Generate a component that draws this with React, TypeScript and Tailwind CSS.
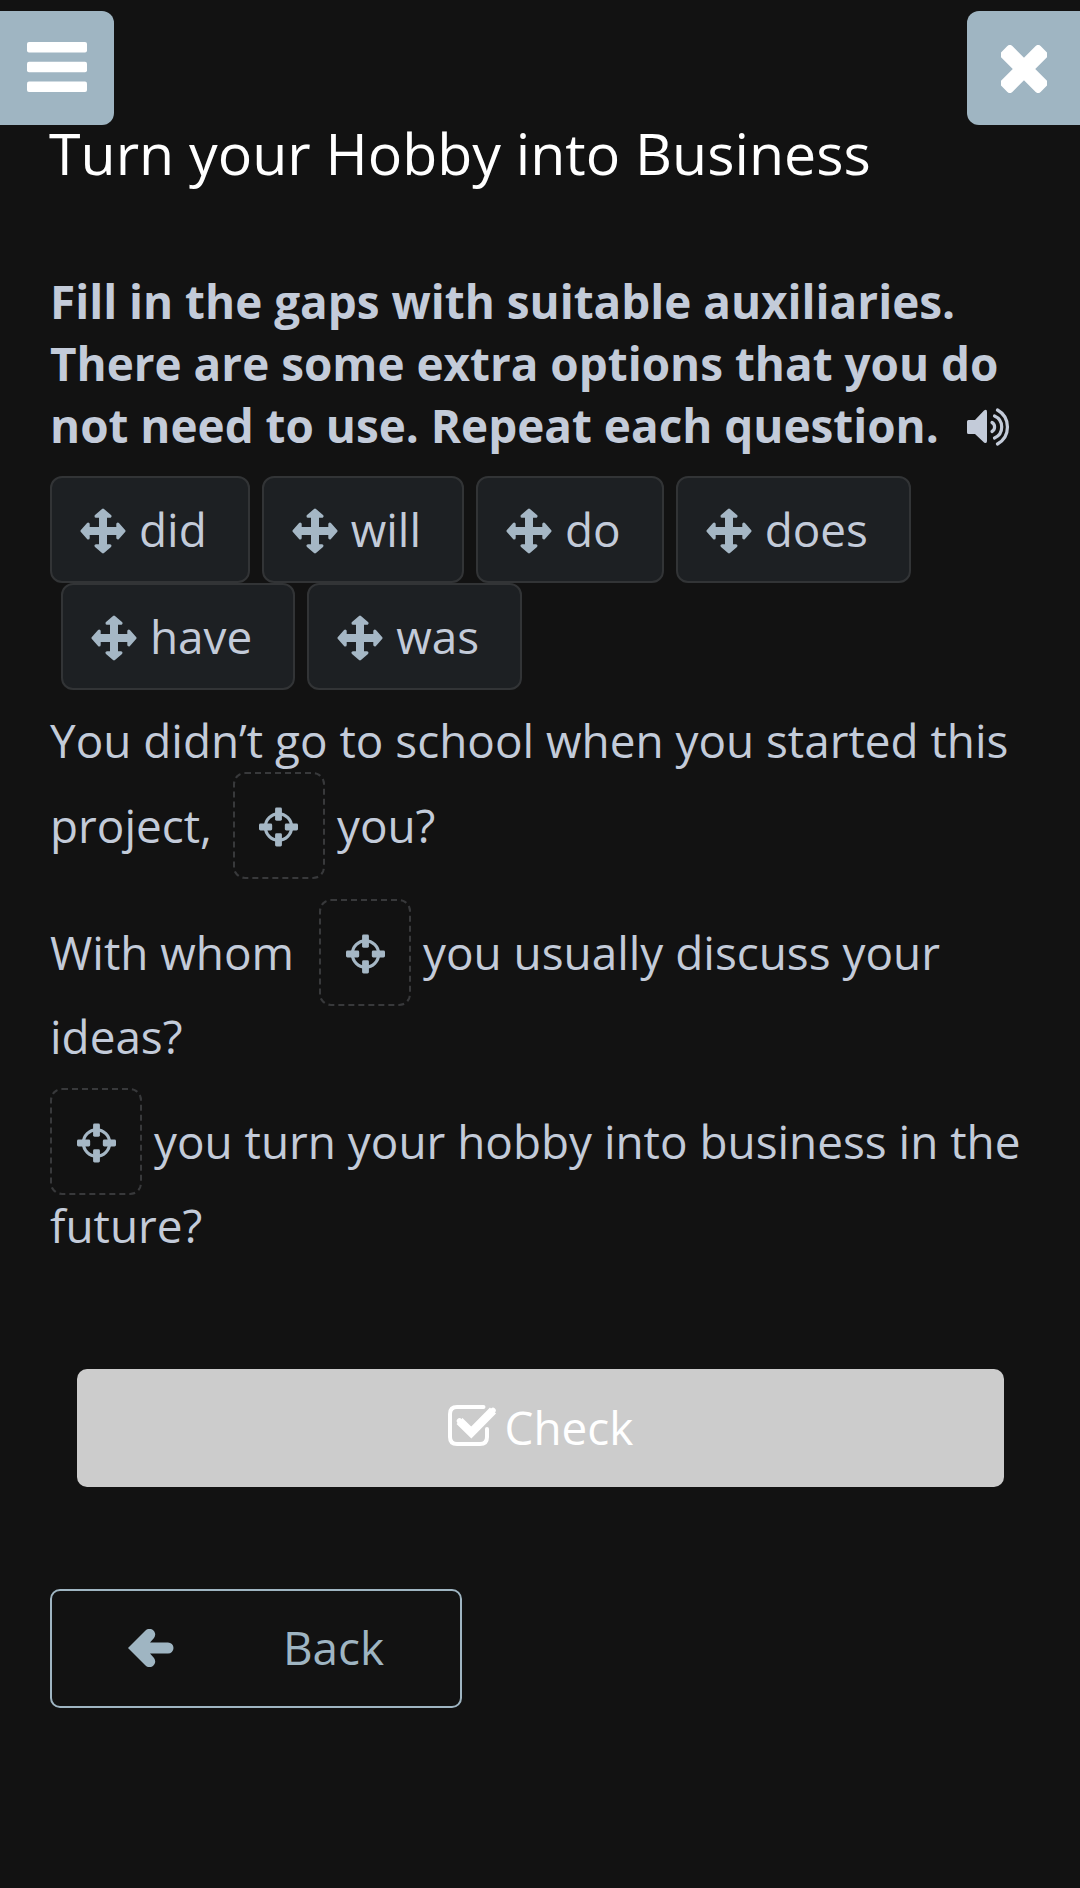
import type { ReactNode } from "react";

const options = [["did", "will", "do", "does"], ["have", "was"]];

function MoveIcon() {
  return (
    <svg viewBox="0 0 46 46" className="w-[46px] h-[46px] mt-[2px] text-[#a5b7c5] shrink-0" fill="currentColor" stroke="currentColor" strokeWidth="3" strokeLinejoin="round">
      <path d="M23 2L30 8.200H25.500V20.500H37.800V16L44 23L37.800 30V25.500H25.500V37.800H30L23 44L16 37.800H20.500V25.500H8.200V30L2 23L8.200 16V20.500H20.500V8.200H16Z" />
    </svg>
  );
}

function TargetIcon() {
  return (
    <svg viewBox="0 0 40 40" className="w-[39px] h-10 mt-[2px] text-[#a5b7c5]" fill="currentColor">
      <circle cx="20" cy="20" r="13.500" fill="none" stroke="currentColor" strokeWidth="3.200" />
      <rect x="16.500" y="0" width="7" height="13.500" rx="1.500" />
      <rect x="16.500" y="26.500" width="7" height="13.500" rx="1.500" />
      <rect x="0" y="16.500" width="13.500" height="7" rx="1.500" />
      <rect x="26.500" y="16.500" width="13.500" height="7" rx="1.500" />
    </svg>
  );
}

function SpeakerIcon() {
  return (
    <svg viewBox="0 0 44 38" className="inline-block w-11 h-[38px] ml-[28px] align-[-3px]" fill="currentColor">
      <path d="M1.500 12H8L17 2.500Q20 0.500 20 4V33Q20 36 17 34.500L8 26H1.500Q0 26 0 24.500V13.500Q0 12 1.500 12Z" />
      <g fill="none" stroke="currentColor" strokeWidth="3.200" strokeLinecap="round">
        <path d="M25 14.500A5.200 5.200 0 0 1 25 23.500" />
        <path d="M27.500 8A12 12 0 0 1 27.500 30" />
        <path d="M30.500 2A19.500 19.500 0 0 1 30.500 36" />
      </g>
    </svg>
  );
}

function Gap() {
  return (
    <span className="flex items-center justify-center w-[92px] h-[107px] shrink-0 border-2 border-dashed border-[#38393b] rounded-xl">
      <TargetIcon />
    </span>
  );
}

function Line({ children }: { children: ReactNode }) {
  return <div className="flex items-center h-[107px] leading-[62px] whitespace-pre">{children}</div>;
}

export default function App() {
  return (
    <div className="w-[1080px] h-[1888px] bg-[#121212] pt-[11px] font-['Open_Sans',sans-serif] text-[45.860px] text-[#c3cbd9] overflow-hidden">
      <header className="flex justify-between h-[114px]">
        <button className="w-[114px] h-[114px] bg-[#9fb5c2] rounded-r-xl pl-[27px] pb-[2px]">
          <svg viewBox="0 0 60 50" className="w-[60px] h-[50px]" fill="white">
            <rect width="60" height="10.500" rx="2" />
            <rect y="19.800" width="60" height="10.500" rx="2" />
            <rect y="39.500" width="60" height="10.500" rx="2" />
          </svg>
        </button>
        <button className="w-[113px] h-[114px] bg-[#9fb5c2] rounded-l-xl pl-[34px] pt-[2px]">
          <svg viewBox="0 0 46 48" className="w-[46px] h-12" fill="white">
            <rect x="-5" y="16" width="56" height="16" rx="3.500" transform="rotate(45 23 24)" />
            <rect x="-5" y="16" width="56" height="16" rx="3.500" transform="rotate(-45 23 24)" />
          </svg>
        </button>
      </header>

      <main className="pl-[50px]">
        <h1 className="h-[145px] -ml-px text-[57.250px] leading-[56px] text-white whitespace-nowrap">Turn your Hobby into Business</h1>
        <h2 className="h-[206px] font-bold leading-[62px] whitespace-nowrap">
          Fill in the gaps with suitable auxiliaries.<br />
          There are some extra options that you do<br />
          not need to use. Repeat each question.
          <SpeakerIcon />
        </h2>

        {options.map((row, i) => (
          <div key={i} className={i === 0 ? "flex gap-3" : "flex gap-3 pl-[11px]"}>
            {row.map((word) => (
              <button key={word} className="flex items-center h-[107px] bg-[#1d2023] border-2 border-[#323436] rounded-xl pl-[28px] pr-[41px] gap-[13px]">
                <MoveIcon />
                {word}
              </button>
            ))}
          </div>
        ))}

        <div className="h-[82px] pt-[19px] leading-[63px] whitespace-nowrap">You didn’t go to school when you started this</div>
        <Line><span className="pb-[2px] pr-[21px]">project,</span><Gap /><span className="pl-3 pb-[2px]">you?</span></Line>
        <div className="h-[20px]" />
        <Line><span className="pb-[2px] pr-[25px]">With whom</span><Gap /><span className="pl-3 pb-[2px]">you usually discuss your</span></Line>
        <div className="h-[82px] leading-[61px]">ideas?</div>
        <Line><Gap /><span className="pl-3 pb-[2px]">you turn your hobby into business in the</span></Line>
        <div className="h-[174px] leading-[61px]">future?</div>

        <button className="flex items-center justify-center gap-2 w-[927px] h-[118px] ml-[27px] bg-[#cccccc] rounded-[10px] text-white">
          <svg viewBox="0 0 49 41" className="w-[49px] h-[41px] mb-[5px]" fill="none" stroke="white">
            <path d="M35.500 2H9Q2 2 2 9V32Q2 39 9 39H32Q39 39 39 32V24" strokeWidth="4" strokeLinecap="round" />
            <path d="M11.500 16L23.300 27.500L45 5.500" strokeWidth="8.500" />
            <path d="M11.500 16L23.300 27.500L45 5.500" strokeWidth="5.500" strokeLinecap="round" />
          </svg>
          <span className="pb-[2px]">Check</span>
        </button>
        <button className="flex items-center w-[412px] h-[119px] mt-[102px] border-2 border-[#9fb5c2] rounded-[10px] text-[#9fb5c2] pl-[76px]">
          <svg viewBox="0 0 46 38" className="w-[46px] h-[38px] mr-[109px] mb-[2px]" fill="currentColor">
            <path d="M0 19L17 2A5.600 5.600 0 0 1 26 9L22 13.500H40A5.500 5.500 0 0 1 40 24.500H22L26 29A5.600 5.600 0 0 1 17 36Z" />
          </svg>
          <span className="pb-[2px]">Back</span>
        </button>
      </main>
    </div>
  );
}
